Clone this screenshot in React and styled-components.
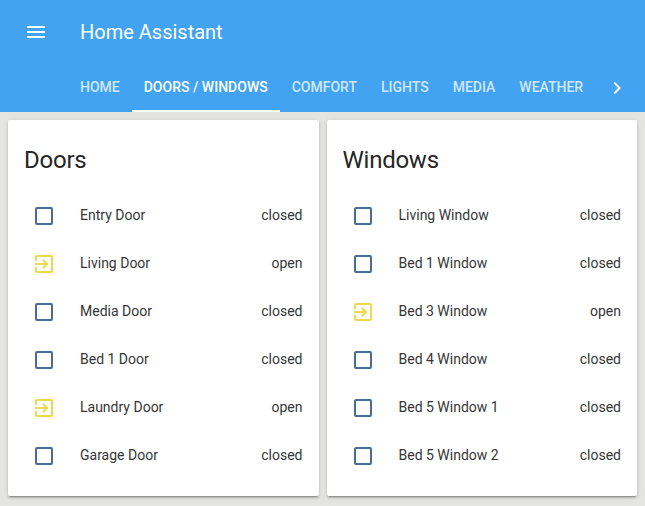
import React from "react";
import styled, { createGlobalStyle } from "styled-components";

const Global = createGlobalStyle`
  html, body {
    margin: 0;
    padding: 0;
    background: #e4e4e3;
    font-family: Roboto, "Liberation Sans", sans-serif;
    overflow: hidden;
  }
`;

const Page = styled.div`
  width: 645px;
  height: 506px;
  overflow: hidden;
`;

const Header = styled.header`
  height: 112px;
  background: #41a3f2;
  color: #fff;
`;

const Toolbar = styled.div`
  display: flex;
  align-items: center;
  height: 64px;
  padding-left: 24px;
`;

const MenuButton = styled.div`
  display: flex;
  width: 56px;
`;

const Title = styled.div`
  font-size: 20px;
  line-height: 28px;
`;

const Tabs = styled.nav`
  display: flex;
  height: 48px;
  padding-left: 68px;
`;

const Tab = styled.div`
  display: flex;
  align-items: center;
  height: 48px;
  box-sizing: border-box;
  padding: 0 12px;
  font-size: 14px;
  font-weight: 500;
  white-space: nowrap;
  color: ${(p) => (p.$active ? "#fff" : "rgba(255,255,255,0.76)")};
  border-bottom: 2px solid ${(p) => (p.$active ? "#fff" : "transparent")};
`;

const Arrow = styled.div`
  display: flex;
  align-items: center;
  margin-left: 10px;
`;

const Columns = styled.main`
  display: flex;
  gap: 8px;
  padding: 8px;
`;

const Card = styled.section`
  flex: 1;
  height: 376px;
  background: #fff;
  border-radius: 2px;
  box-shadow: 0 2px 2px rgba(0,0,0,0.14), 0 1px 5px rgba(0,0,0,0.12), 0 3px 1px -2px rgba(0,0,0,0.2);
`;

const CardTitle = styled.h2`
  margin: 0;
  padding: 24px 16px 16px;
  font-size: 24px;
  font-weight: 400;
  line-height: 32px;
  letter-spacing: -0.25px;
  color: #262626;
`;

const Row = styled.div`
  display: flex;
  align-items: center;
  height: 48px;
  padding: 0 16px 0 24px;
  font-size: 14px;
  color: #363636;
`;

const IconBox = styled.div`
  display: flex;
  width: 48px;
`;

const Name = styled.div`
  flex: 1;
  margin-bottom: 2px;
`;

const State = styled.div`
  margin-bottom: 2px;
`;

const Menu = () => (
  <svg width="24" height="24" viewBox="0 0 24 24" fill="#fff">
    <path d="M3 18h18v-2H3v2zm0-5h18v-2H3v2zm0-7v2h18V6H3z" />
  </svg>
);

const Chevron = () => (
  <svg width="24" height="24" viewBox="0 0 24 24" fill="#fff">
    <path d="M10 6L8.59 7.41 13.17 12l-4.58 4.59L10 18l6-6z" />
  </svg>
);

const Closed = () => (
  <svg width="24" height="24" viewBox="0 0 24 24" fill="#486d98">
    <path d="M19 3H5a2 2 0 0 0-2 2v14a2 2 0 0 0 2 2h14a2 2 0 0 0 2-2V5a2 2 0 0 0-2-2zm0 16H5V5h14v14z" />
  </svg>
);

const Open = () => (
  <svg width="24" height="24" viewBox="0 0 24 24" fill="#ecd94e">
    <path d="M19 3H5a2 2 0 0 0-2 2v4h2V5h14v14H5v-4H3v4a2 2 0 0 0 2 2h14a2 2 0 0 0 2-2V5a2 2 0 0 0-2-2zm-8.9 12.6L11.5 17l5-5-5-5-1.4 1.4 2.6 2.6H3v2h9.7l-2.6 2.6z" />
  </svg>
);

const doors = [
  ["Entry Door", "closed"],
  ["Living Door", "open"],
  ["Media Door", "closed"],
  ["Bed 1 Door", "closed"],
  ["Laundry Door", "open"],
  ["Garage Door", "closed"],
];

const windows = [
  ["Living Window", "closed"],
  ["Bed 1 Window", "closed"],
  ["Bed 3 Window", "open"],
  ["Bed 4 Window", "closed"],
  ["Bed 5 Window 1", "closed"],
  ["Bed 5 Window 2", "closed"],
];

const tabs = ["HOME", "DOORS / WINDOWS", "COMFORT", "LIGHTS", "MEDIA", "WEATHER"];

function SensorCard({ title, items }) {
  return (
    <Card>
      <CardTitle>{title}</CardTitle>
      {items.map(([name, state]) => (
        <Row key={name}>
          <IconBox>{state === "open" ? <Open /> : <Closed />}</IconBox>
          <Name>{name}</Name>
          <State>{state}</State>
        </Row>
      ))}
    </Card>
  );
}

export default function App() {
  return (
    <Page>
      <Global />
      <Header>
        <Toolbar>
          <MenuButton><Menu /></MenuButton>
          <Title>Home Assistant</Title>
        </Toolbar>
        <Tabs>
          {tabs.map((t) => (
            <Tab key={t} $active={t === "DOORS / WINDOWS"}>{t}</Tab>
          ))}
          <Arrow><Chevron /></Arrow>
        </Tabs>
      </Header>
      <Columns>
        <SensorCard title="Doors" items={doors} />
        <SensorCard title="Windows" items={windows} />
      </Columns>
    </Page>
  );
}
